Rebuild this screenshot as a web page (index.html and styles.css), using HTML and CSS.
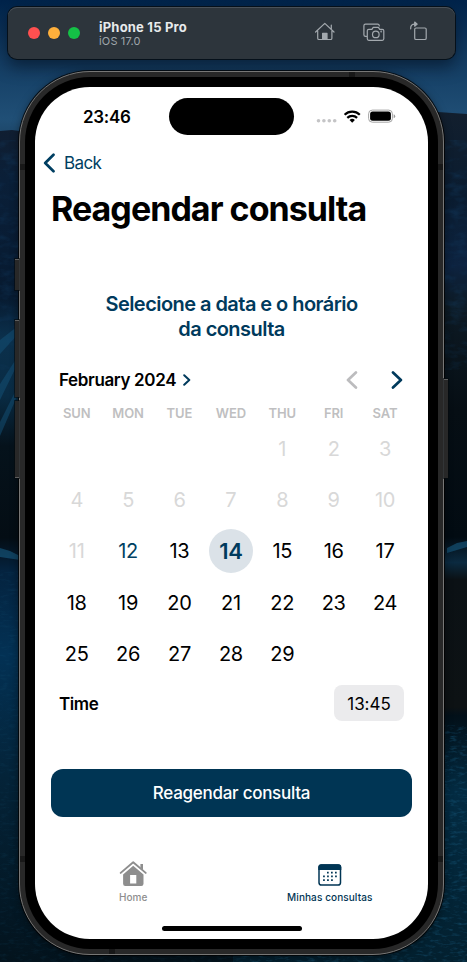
FILE: index.html
```html
<!DOCTYPE html>
<html lang="pt-BR">
<head>
<meta charset="utf-8">
<title>iPhone 15 Pro</title>
<link rel="stylesheet" href="styles.css">
</head>
<body>
<svg class="wallpaper" width="467" height="962" viewBox="0 0 467 962" aria-hidden="true">
  <defs>
    <linearGradient id="sky" x1="0" y1="0" x2="0" y2="1"><stop offset="0" stop-color="#00234a"/><stop offset=".4" stop-color="#123b61"/><stop offset=".85" stop-color="#204f76"/><stop offset="1" stop-color="#1c4465"/></linearGradient>
    <linearGradient id="left" gradientUnits="userSpaceOnUse" x1="0" y1="130" x2="0" y2="962"><stop offset="0" stop-color="#101e31"/><stop offset=".06" stop-color="#0a1f38"/><stop offset=".2" stop-color="#071a30"/><stop offset=".25" stop-color="#0b304c"/><stop offset=".32" stop-color="#092b43"/><stop offset=".38" stop-color="#05121b"/><stop offset=".49" stop-color="#040d14"/><stop offset=".53" stop-color="#04233f"/><stop offset=".63" stop-color="#033154"/><stop offset=".78" stop-color="#042338"/><stop offset="1" stop-color="#03131d"/></linearGradient>
    <linearGradient id="right" gradientUnits="userSpaceOnUse" x1="0" y1="112" x2="0" y2="962"><stop offset="0" stop-color="#121f2e"/><stop offset=".1" stop-color="#0a1c30"/><stop offset=".18" stop-color="#0d2340"/><stop offset=".23" stop-color="#0d1a24"/><stop offset=".35" stop-color="#060e14"/><stop offset=".5" stop-color="#020b12"/><stop offset=".53" stop-color="#0b2a40"/><stop offset=".55" stop-color="#0b1115"/><stop offset=".7" stop-color="#0d1214"/><stop offset=".71" stop-color="#021019"/><stop offset=".8" stop-color="#032b42"/><stop offset="1" stop-color="#03202f"/></linearGradient>
    <filter id="rock" x="0" y="0" width="1" height="1" color-interpolation-filters="sRGB"><feTurbulence type="fractalNoise" baseFrequency=".06 .12" numOctaves="4" seed="4"/><feColorMatrix values="0 0 0 0 .08  0 0 0 0 .26  0 0 0 0 .42  2.4 0 0 0 -1.1"/></filter>
    <filter id="waves" x="0" y="0" width="1" height="1" color-interpolation-filters="sRGB"><feTurbulence type="fractalNoise" baseFrequency=".12 .35" numOctaves="3" seed="9"/><feColorMatrix values="0 0 0 0 .1  0 0 0 0 .36  0 0 0 0 .5  2.2 0 0 0 -1.1"/></filter>
  </defs>
  <rect width="467" height="140" fill="url(#sky)"/>
  <path d="M0 131l12-1 22 3H240V962H0z" fill="url(#left)"/>
  <path d="M233 115l205-3 29 2V962H233z" fill="url(#right)"/>
  <path d="M0 340l18-14v8L0 354zM0 384l18-28v7L0 400zM0 422l18-36v8L0 436z" fill="#145178" opacity=".5"/>
  <path d="M0 548l10 3 10 5v4L0 557zM447 548l10-5 10-2v6l-20 6z" fill="#175b82" opacity=".6"/>
  <rect y="140" width="467" height="230" filter="url(#rock)" opacity=".35"/>
  <rect y="725" x="233" width="234" height="237" filter="url(#waves)" opacity=".6"/>
  <rect y="570" width="233" height="392" filter="url(#waves)" opacity=".2"/>
</svg>

<div class="desktop">
  <header class="toolbar">
    <div class="lights"><i class="light red"></i><i class="light amber"></i><i class="light green"></i></div>
    <div class="device"><strong>iPhone 15 Pro</strong><span>iOS 17.0</span></div>
    <svg class="tools" width="116" height="24" viewBox="313 20 116 24" fill="none" stroke="#a3a9ae" stroke-width="1.2" stroke-linejoin="round" stroke-linecap="round">
      <path d="M315.600 32l9.200-8.600 9.200 8.600M331.300 28.800V25M317.700 31v7.200q0 1.300 1.300 1.300h11.600q1.300 0 1.300-1.300V31"/>
      <path d="M322.600 39.500v-6.200h4.400v6.200z" fill="#a3a9ae"/>
      <path d="M366.300 36.300h-.8q-1.600 0-1.600-1.600v-8.900q0-1.600 1.600-1.600h12.100q1.500 0 1.700 1.600M368.800 29.300h3.100l1.300-1.900h5.200l1.300 1.900h2.600q1.500 0 1.500 1.500v8q0 1.500-1.500 1.500h-13.500q-1.500 0-1.500-1.500v-8q0-1.500 1.500-1.500z"/>
      <circle cx="375.800" cy="34.400" r="3.300"/><circle cx="381.200" cy="31.500" r=".3"/>
      <rect x="414.700" y="28" width="11.500" height="11.500" rx="1.300"/>
      <path d="M410.700 28.800v-.7q0-4 4-4h1"/><path d="M414.700 22l2.500 2.100-2.500 2.100z" fill="#a3a9ae"/>
    </svg>
  </header>

  <div class="phone">
    <i class="side action"></i><i class="side volume-up"></i><i class="side volume-down"></i><i class="side power"></i>
    <i class="seam tl"></i><i class="seam tr"></i><i class="seam bl"></i><i class="seam br"></i><i class="seam top"></i><i class="seam bottom"></i>
    <div class="bezel">
      <main class="screen">
        <div class="status">
          <time>23:46</time>
          <div class="island"></div>
          <svg width="80" height="18" viewBox="316 108 80 18">
            <g fill="#c4c4c6"><circle cx="318.500" cy="120.700" r="1.800"/><circle cx="323.900" cy="120.700" r="1.800"/><circle cx="329.300" cy="120.700" r="1.800"/><circle cx="334.700" cy="120.700" r="1.800"/></g>
            <g fill="none" stroke="#000" stroke-width="2.200"><path d="M344.600 114.800a10.900 10.900 0 0 1 15.200 0"/><path d="M347.300 117.900a7 7 0 0 1 9.800 0"/></g>
            <path d="M349.500 120a3.900 3.900 0 0 1 5.400 0l-2.700 2.700z"/>
            <rect x="368.600" y="110.100" width="23.800" height="12.100" rx="3.700" fill="none" stroke="#a5a5a5"/>
            <rect x="370.100" y="111.600" width="20.800" height="9.100" rx="2.500"/><path d="M393.700 114.200q1.500.6 1.500 2t-1.500 2z" fill="#999"/>
          </svg>
        </div>
        <nav class="back">
          <svg width="13" height="20" viewBox="0 0 13 20"><path d="M10.500 1.800L2.200 10l8.300 8.200"/></svg><span>Back</span>
        </nav>
        <h1>Reagendar consulta</h1>
        <h2>Selecione a data e o horário<br>da consulta</h2>
        <section class="calendar">
          <div class="month">
            <b>February 2024</b>
            <svg class="more" width="8" height="12" viewBox="0 0 8 12"><path d="M1.200 1.200L6.300 6l-5.100 4.800"/></svg>
            <svg class="prev" width="12" height="18" viewBox="0 0 12 18"><path d="M9.900 1.500L2 9l7.900 7.500"/></svg>
            <svg class="next" width="12" height="18" viewBox="0 0 12 18"><path d="M2 1.500L9.900 9 2 16.500"/></svg>
          </div>
          <div class="weekdays"><span>SUN</span><span>MON</span><span>TUE</span><span>WED</span><span>THU</span><span>FRI</span><span>SAT</span></div>
          <div class="days">
            <span class="past first">1</span><span class="past">2</span><span class="past">3</span>
            <span class="past">4</span><span class="past">5</span><span class="past">6</span><span class="past">7</span><span class="past">8</span><span class="past">9</span><span class="past">10</span>
            <span class="past">11</span><span class="today">12</span><span>13</span><span class="selected">14</span><span>15</span><span>16</span><span>17</span>
            <span>18</span><span>19</span><span>20</span><span>21</span><span>22</span><span>23</span><span>24</span>
            <span>25</span><span>26</span><span>27</span><span>28</span><span>29</span>
          </div>
          <div class="time"><b>Time</b><span class="pill">13:45</span></div>
        </section>
        <button class="submit"><span>Reagendar consulta</span></button>
        <footer class="tabs">
          <div class="tab">
            <svg width="28" height="26" viewBox="119 861 28 26" fill="#8e8e8e"><path d="M120.700 872.900l12.500-10.600 12.500 10.600" fill="none" stroke="#8e8e8e" stroke-width="1.900" stroke-linecap="round" stroke-linejoin="round"/><path d="M140.400 864h2.600v6l-2.600-2.200z"/><path fill-rule="evenodd" d="M133.200 865.800l10.300 8.700v9.300q0 2.200-2.200 2.200h-16q-2.200 0-2.200-2.200v-9.300zM130.100 875v8.600h6.200V875z"/></svg>
            <span class="home-label">Home</span>
          </div>
          <div class="tab active">
            <svg width="28" height="26" viewBox="316 861 28 26"><rect x="319" y="865" width="21.500" height="20" rx="2.600" fill="none" stroke="#003554" stroke-width="1.500"/><path d="M318.300 870v-2.700q0-3 3-3h17q3 0 3 3v2.700z" fill="#003554"/><g fill="none" stroke="#003554" stroke-width="1.700" stroke-dasharray="1.700 2.300"><path d="M327 872.700h10M323.100 876.400h14M323.100 880.200h10"/></g></svg>
            <span class="visits-label">Minhas consultas</span>
          </div>
        </footer>
        <div class="indicator"></div>
      </main>
    </div>
  </div>
</div>
</body>
</html>
```
FILE: styles.css
```css
* { box-sizing: border-box; }
body { margin: 0; width: 467px; height: 962px; overflow: hidden; background: #03131d; font-family: Inter, "Liberation Sans", sans-serif; color: #000; }
svg { display: block; flex: none; }
.wallpaper { position: absolute; top: 0; left: 0; }
.desktop { position: relative; padding: 7px 0 0 8px; }

.toolbar { display: flex; align-items: center; width: 447px; height: 52px; padding: 0 26px 0 20px; border-radius: 9px; background: #2d353c; box-shadow: 0 0 0 1px #05101a, inset 0 1px 0 #4a5158, 0 8px 16px rgba(0, 8, 20, .5); }
.tools { margin-bottom: 2px; }
.lights { display: flex; gap: 8px; }
.light { width: 12px; height: 12px; border-radius: 50%; }
.red { background: #ff5050; }
.amber { background: #ffb03c; }
.green { background: #14c146; }
.device { display: flex; flex-direction: column; margin: 0 auto 0 19px; color: #e8eaeb; font-size: 13px; line-height: 16px; }
.device strong { font-weight: 700; letter-spacing: .2px; }
.device span { color: #a0a7ac; font-size: 11px; line-height: 13px; letter-spacing: .15px; }

.phone { position: relative; width: 425px; height: 884px; margin: 12px 0 0 11px; padding: 5px; border: 1px solid #777776; border-radius: 71px; background: #282828; box-shadow: 0 0 0 1px rgba(0, 0, 0, .75), 0 2px 8px rgba(0, 0, 0, .5); }
.bezel { position: relative; height: 872px; padding: 10px; border-radius: 65px; background: #000; }
.screen { display: flex; flex-direction: column; width: 393px; height: 852px; padding: 0 16px; border-radius: 55px; background: #fff; overflow: hidden; }
.side { position: absolute; left: -5px; width: 4px; background: #282828; border: solid #5e5e5e; border-width: 1px 0 0; box-shadow: 0 0 0 1px rgba(5, 10, 14, .6); }
.action { top: 187px; height: 31px; }
.volume-up { top: 248px; height: 77px; }
.volume-down { top: 329px; height: 77px; border-width: 0 0 1px; }
.power { left: auto; right: -5px; top: 307px; height: 99px; }
.seam { position: absolute; width: 5px; height: 6px; background: #181818; }
.tl { left: 0; top: 92px; }
.tr { right: 0; top: 92px; }
.bl { left: 0; bottom: 92px; }
.br { right: 0; bottom: 92px; }
.top { right: 88px; top: 0; width: 6px; height: 5px; }
.bottom { left: 89px; bottom: 0; width: 6px; height: 5px; }

.status { display: flex; align-items: center; height: 59px; flex: none; padding: 0 16px 0 32px; }
.status time { width: 50px; font-size: 17px; font-weight: 600; letter-spacing: -.3px; white-space: nowrap; }
.island { width: 125px; height: 37px; margin: 0 auto 0 36px; border-radius: 19px; background: #000; }
.back { display: flex; align-items: center; height: 34px; margin-left: -8px; gap: 8px; color: #003f62; font-size: 17px; letter-spacing: -.6px; flex: none; }
.back path, .month path { fill: none; stroke: currentColor; stroke-width: 2.7; stroke-linecap: round; stroke-linejoin: round; }
h1 { margin: 0; height: 58px; flex: none; font-size: 34px; line-height: 58px; font-weight: 700; letter-spacing: -.96px; white-space: nowrap; }
h2 { margin: 54px 0 0; flex: none; color: #003a5c; font-size: 20px; line-height: 25px; font-weight: 600; letter-spacing: -.55px; text-align: center; }
.calendar { margin-top: 16px; flex: none; }
.month { display: flex; align-items: center; height: 44px; padding: 0 9px 0 8px; color: #003a5c; }
.month b { color: #000; font-size: 17px; font-weight: 600; letter-spacing: -.36px; }
.more { margin-left: 7px; margin-right: auto; }
.more path { stroke-width: 2; }
.prev { color: #bcbcbe; margin-right: 33px; }
.weekdays, .days { display: grid; grid-template-columns: repeat(7, 51.4px); text-align: center; }
.weekdays { height: 21px; line-height: 23px; font-size: 13px; font-weight: 600; color: #bfbfc1; letter-spacing: -.1px; }
.days { grid-auto-rows: 51.3px; align-items: center; font-size: 20px; letter-spacing: -.3px; }
.first { grid-column: 5; }
.past { color: #d8d8d8; }
.today { color: #003f62; }
.selected { justify-self: center; width: 44px; height: 44px; border-radius: 50%; background: #dbe2e8; color: #003a5c; font-size: 22px; line-height: 44px; font-weight: 600; }
.time { display: flex; justify-content: space-between; align-items: center; height: 36px; margin-top: 6px; padding: 0 8px; font-size: 17px; letter-spacing: -.3px; }
.time b { padding-top: 2px; font-weight: 600; letter-spacing: -.4px; }
.pill { width: 70px; height: 36px; border-radius: 8px; background: #ebebed; text-align: center; line-height: 38px; letter-spacing: -.05px; }
.submit { flex: none; height: 48px; margin: 48px 0 0; padding: 0; border: 0; border-radius: 12px; background: #003554; color: #fff; font: 500 17px/49px Inter, sans-serif; letter-spacing: -.28px; }
.tabs { display: grid; grid-template-columns: 1fr 1fr; margin: 44px -16px 0; flex: none; }
.tab { display: flex; flex-direction: column; align-items: center; gap: 4px; color: #8e8e8e; font-size: 10px; line-height: 12px; font-weight: 500; letter-spacing: .1px; }
.active { color: #003554; }
.indicator { width: 140px; height: 5px; margin: auto auto 8px; border-radius: 3px; background: #000; }
```
